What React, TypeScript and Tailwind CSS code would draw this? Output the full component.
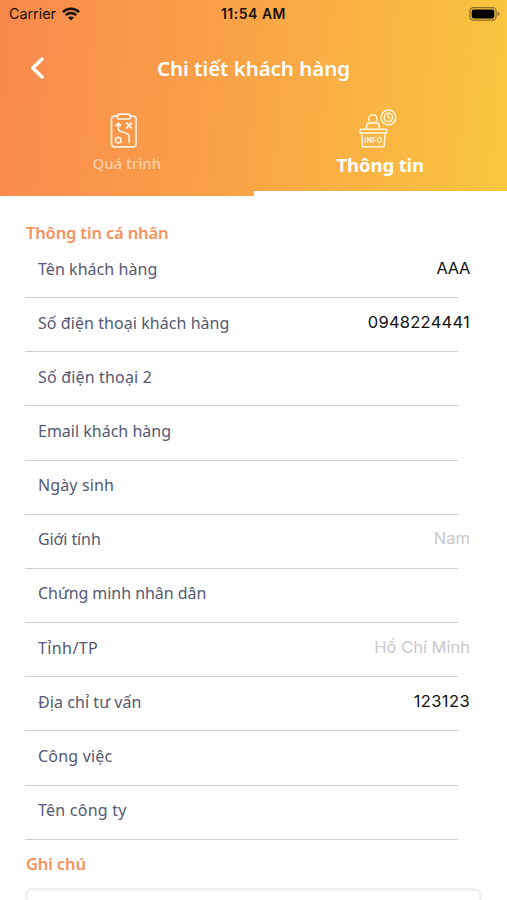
import React from "react";

type Field = { label: string; spacing: string; value?: string; valueClass?: string };

const fields: Field[] = [
  { label: "Tên khách hàng", spacing: "tracking-[0.05px]", value: "AAA", valueClass: "text-[#111] text-[16.5px] tracking-[-0.4px]" },
  { label: "Số điện thoại khách hàng", spacing: "tracking-[0.06px]", value: "0948224441", valueClass: "text-[#111] text-[16.5px] tracking-[0.25px]" },
  { label: "Số điện thoại 2", spacing: "tracking-[0.17px]" },
  { label: "Email khách hàng", spacing: "tracking-[0px]" },
  { label: "Ngày sinh", spacing: "tracking-[0.12px]" },
  { label: "Giới tính", spacing: "tracking-[-0.1px]", value: "Nam", valueClass: "text-[#c9c9cb] text-[16.5px]" },
  { label: "Chứng minh nhân dân", spacing: "tracking-[-0.05px]" },
  { label: "Tỉnh/TP", spacing: "tracking-[0.4px]", value: "Hồ Chí Minh", valueClass: "text-[#c9c9cb] text-[16.5px]" },
  { label: "Địa chỉ tư vấn", spacing: "tracking-[0.07px]", value: "123123", valueClass: "text-[#111] text-[16.5px] tracking-[0.4px]" },
  { label: "Công việc", spacing: "tracking-[0.2px]" },
  { label: "Tên công ty", spacing: "tracking-[0.25px]" },
];

function WifiIcon() {
  return (
    <svg width="18" height="14" viewBox="0 0 18 14" fill="none" stroke="#171006" strokeWidth="2.5">
      <path d="M0.9 5.1C5.4.7 12.6.7 17.1 5.1" />
      <path d="M3.8 8.2C6.7 5.4 11.3 5.4 14.2 8.2" />
      <path d="M9 13.6L6 10.5C7.7 9 10.3 9 12 10.5Z" fill="#171006" stroke="none" />
    </svg>
  );
}

function BatteryIcon() {
  return (
    <svg width="31" height="14" viewBox="0 0 31 14">
      <rect x="0.9" y="0.6" width="26.2" height="12.6" rx="3.6" fill="none" stroke="#8b6d25" strokeWidth="1.2" />
      <rect x="2.7" y="2.4" width="22.6" height="9" rx="1.8" fill="#000" />
      <path d="M28.6 4.6Q30.5 5.4 30.5 6.9T28.6 9.2Z" fill="#8b6d25" />
    </svg>
  );
}

function ProcessIcon() {
  return (
    <svg width="28" height="36" viewBox="0 0 28 36" fill="none" stroke="#fff0df" strokeWidth="1.7" strokeLinecap="round" strokeLinejoin="round">
      <path d="M7.5 3.2H4.2Q1.5 3.2 1.5 6V31Q1.5 33.8 4.2 33.8H23.3Q26 33.8 26 31V6Q26 3.2 23.3 3.2H20.2" />
      <path d="M9 1.2H18.6Q20.3 1.2 20.3 3V4.2Q20.3 6 18.6 6H9Q7.3 6 7.3 4.2V3Q7.3 1.2 9 1.2Z" />
      <path d="M16.7 10.3L21.3 14.9M21.3 10.3L16.7 14.9" strokeWidth="2" />
      <path d="M8.3 11.5V15.8Q8.3 18 11 18.6L14.9 19.8Q19.2 21 19.2 24.5V29.3" />
      <path d="M6 12.4L8.3 10.1L10.6 12.4Z" fill="#fff0df" />
      <circle cx="8.3" cy="27.2" r="2.8" />
    </svg>
  );
}

function InfoIcon() {
  return (
    <svg width="40" height="40" viewBox="0 0 40 40" fill="none" stroke="#fff5df" strokeWidth="1.5" strokeLinecap="round" strokeLinejoin="round">
      <path d="M2.1 20.2H28.6V24H2.1Z" />
      <path d="M3.6 24.2L4.6 37.7H26.1L27.1 24.2" />
      <path d="M8.6 19.8V16.5Q8.6 13.9 11.5 13.9H18.2Q21.1 13.9 21.1 16.5V19.8" />
      <circle cx="14.9" cy="9.9" r="4.1" />
      <circle cx="30.4" cy="8.5" r="7.4" />
      <circle cx="30.4" cy="8.5" r="4.2" />
      <path d="M30.3 6.5V8.7L31.8 9.4" strokeWidth="1.2" />
      <text x="15.4" y="33.6" textAnchor="middle" fontSize="7.2" fontWeight="700" letterSpacing="0.2" fontFamily="Inter, sans-serif" fill="#fff5df" stroke="none">INFO</text>
    </svg>
  );
}

export default function App() {
  return (
    <main className="h-[900px] w-[507px] overflow-hidden bg-white font-['Noto_Sans','Open_Sans',sans-serif]">
      <header className="flex h-[196px] flex-col bg-[linear-gradient(95deg,#f9894e_0%,#f9a247_45%,#f9c63f_100%)]">
        <div className="grid h-[27px] grid-cols-3 items-center pr-[7px] pl-[9px] font-['Inter',sans-serif] text-[#171006]">
          <div className="flex items-center gap-1.5 text-[14.3px]">
            <span>Carrier</span>
            <WifiIcon />
          </div>
          <span className="-ml-0.5 text-center text-[14px] font-semibold tracking-[0.5px] whitespace-nowrap">11:54 AM</span>
          <div className="flex justify-end"><BatteryIcon /></div>
        </div>

        <div className="grid h-[81px] grid-cols-[60px_1fr_60px] items-center text-white">
          <button aria-label="Back" className="pl-[30px]">
            <svg width="15" height="22" viewBox="0 0 15 22" fill="none" stroke="white" strokeWidth="3.4" strokeLinecap="round" strokeLinejoin="round">
              <path d="M12 2L2.7 11L12 20" />
            </svg>
          </button>
          <h1 className="text-center text-[20.5px] leading-7 font-semibold tracking-[-0.05px] whitespace-nowrap">Chi tiết khách hàng</h1>
        </div>

        <nav className="grid flex-1 grid-cols-2">
          <button className="flex flex-col items-center justify-start pt-[5px]">
            <span className="-ml-1.5 h-9"><ProcessIcon /></span>
            <span className="mt-1 text-[15px] leading-5 font-medium text-[#fdd0a8]">Quá trình</span>
          </button>
          <button className="flex flex-col items-center justify-start border-b-[5px] border-white pt-px">
            <span className="-ml-[5px] h-10"><InfoIcon /></span>
            <span className="mt-1 text-[18.5px] leading-6 font-bold tracking-[-0.1px] text-white">Thông tin</span>
          </button>
        </nav>
      </header>

      <section className="px-[25px] pt-6">
        <h2 className="h-6 pt-px pl-px text-[16.5px] leading-6 font-semibold tracking-[-0.15px] text-[#f5925d]">Thông tin cá nhân</h2>
        <div>
          {fields.map((field) => (
            <div key={field.label} className="flex h-[54.17px] flex-col">
              <div className="flex flex-1 items-start justify-between pt-[12.5px] pr-3 pl-[13px] leading-6">
                <span className={`text-[16px] whitespace-nowrap text-[#555873] ${field.spacing}`}>{field.label}</span>
                <span className={`-mt-px font-['Inter',sans-serif] whitespace-nowrap ${field.valueClass ?? ""}`}>{field.value}</span>
              </div>
              <div className="mr-6 border-b border-[#cfcfcf]" />
            </div>
          ))}
        </div>
        <h2 className="mt-3 h-6 pl-px text-[16.5px] leading-6 font-semibold tracking-[-0.15px] text-[#f5925d]">Ghi chú</h2>
        <div className="mt-3 h-24 w-[457px] rounded-md border-[3px] border-[#f2f2f2]" />
      </section>
    </main>
  );
}
